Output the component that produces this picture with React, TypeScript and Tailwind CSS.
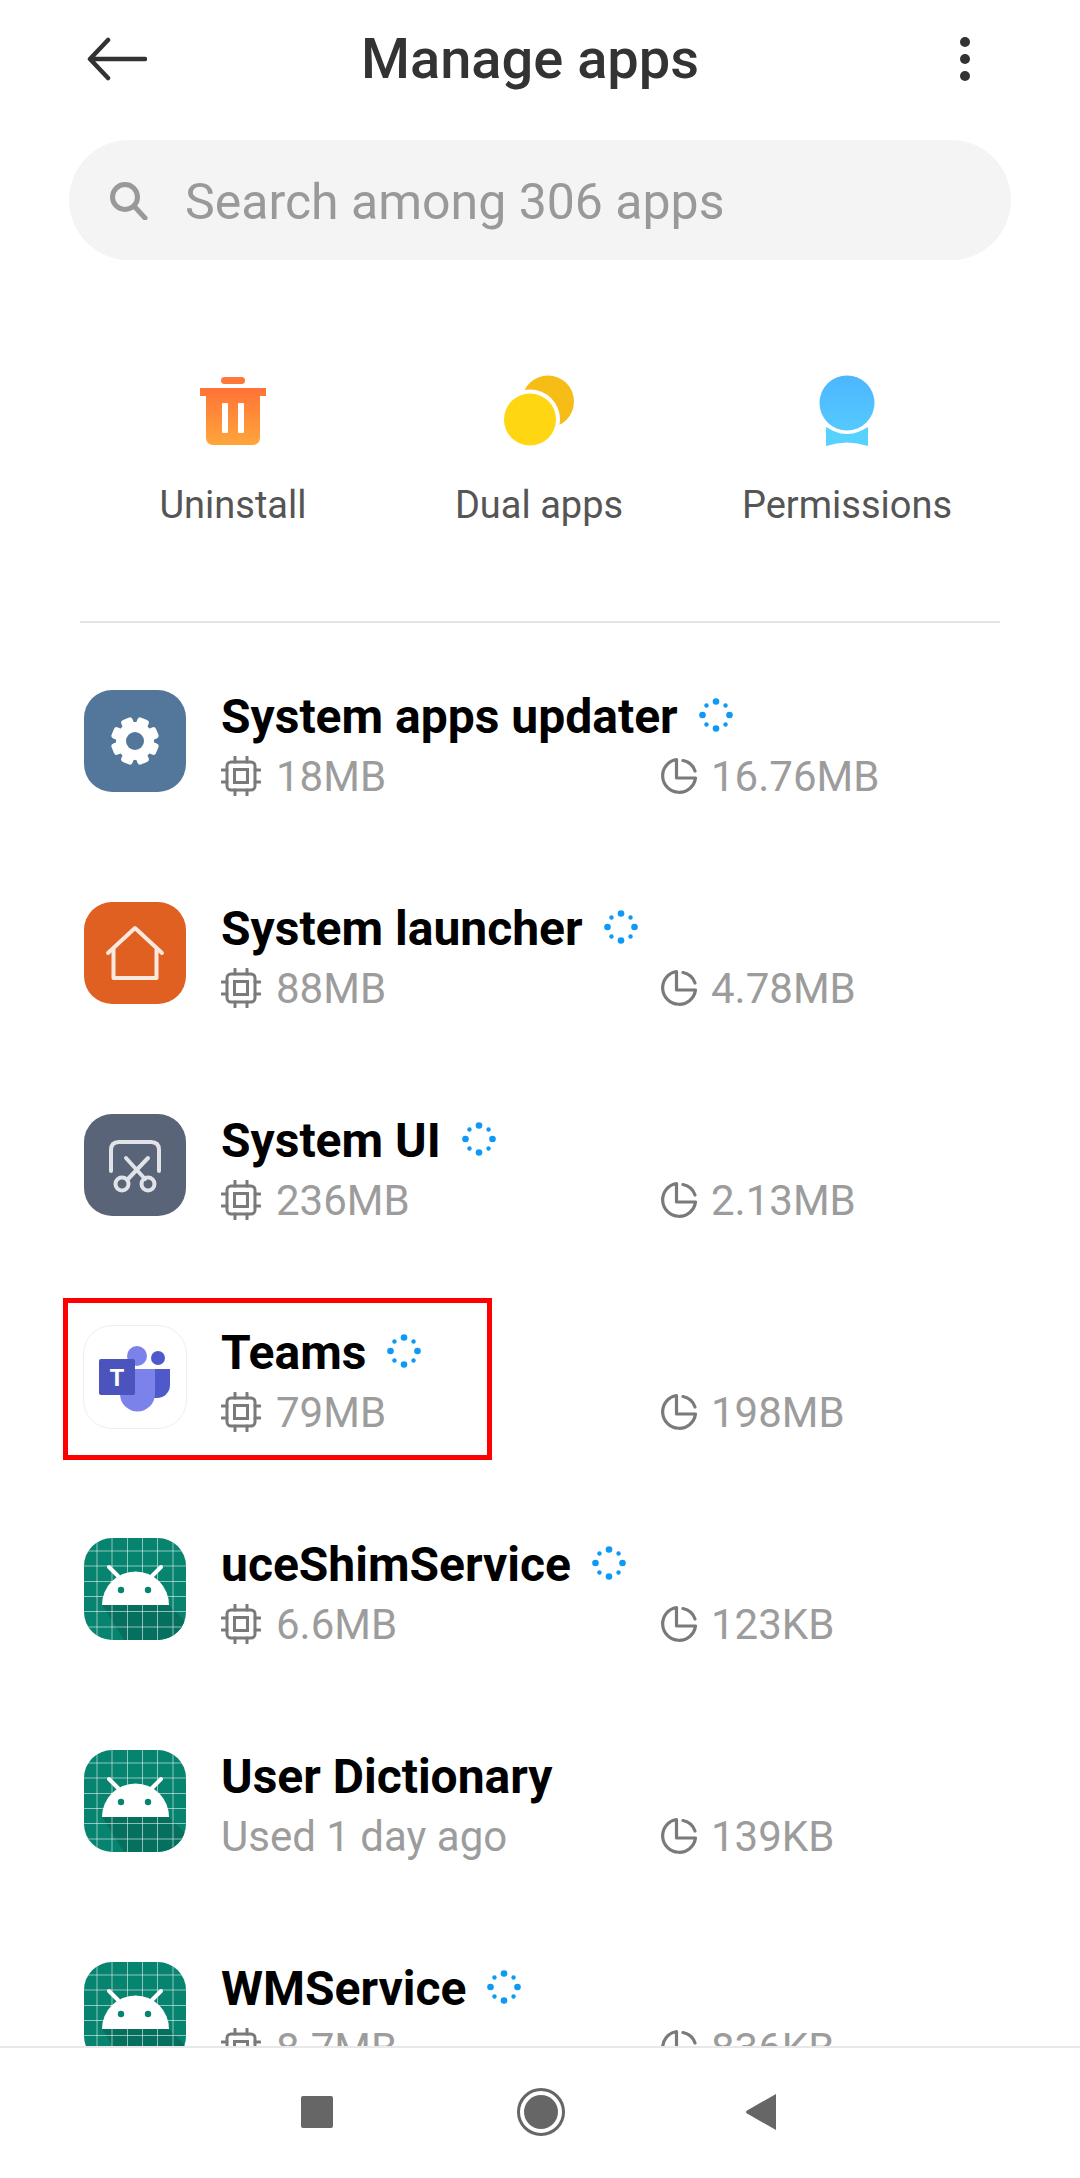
// Manage apps screen
import React from "react";

const font = { fontFamily: "Roboto, sans-serif" };

function Spinner() {
  const big = [0, 90, 180, 270];
  const small = [45, 135, 225, 315];
  const pt = (deg: number) => {
    const a = (deg * Math.PI) / 180;
    return { cx: 17 + 13.5 * Math.cos(a), cy: 17 + 13.5 * Math.sin(a) };
  };
  return (
    <svg width="34" height="34" viewBox="0 0 34 34" className="mb-[4px] shrink-0">
      {big.map((d) => (
        <circle key={d} {...pt(d)} r="3.300" fill="#0d99f5" />
      ))}
      {small.map((d) => (
        <circle key={d} {...pt(d)} r="2.200" fill="#0d99f5" />
      ))}
    </svg>
  );
}

function ChipIcon() {
  return (
    <svg width="40" height="40" viewBox="0 0 40 40" fill="none" stroke="#7a7a7a" strokeWidth="3" className="shrink-0">
      <rect x="6" y="6" width="28" height="28" rx="4" />
      <rect x="13.5" y="13.5" width="13" height="13" />
      <path d="M14 1v5M26 1v5M14 34v5M26 34v5M1 14h5M1 26h5M34 14h5M34 26h5" strokeLinecap="round" />
    </svg>
  );
}

function PieIcon() {
  return (
    <svg width="40" height="40" viewBox="0 0 40 40" fill="none" stroke="#7a7a7a" strokeWidth="3.2" className="shrink-0">
      <path d="M17.5 3.5A16.5 16.5 0 1 0 36.5 22H17.5V3.5Z" strokeLinejoin="round" />
      <path d="M24 4.5A16 16 0 0 1 36 15" strokeLinecap="round" />
    </svg>
  );
}

function GearIcon() {
  const teeth = [0, 45, 90, 135, 180, 225, 270, 315];
  return (
    <svg width="102" height="102" viewBox="0 0 102 102">
      <rect width="102" height="102" fill="#52779a" />
      {teeth.map((d) => (
        <rect key={d} x="45" y="27" width="12" height="14" rx="3" fill="#fff" transform={`rotate(${d + 22.5} 51 51)`} />
      ))}
      <circle cx="51" cy="51" r="19" fill="#fff" />
      <circle cx="51" cy="51" r="9" fill="#52779a" />
    </svg>
  );
}

function HomeIcon() {
  return (
    <svg width="102" height="102" viewBox="0 0 102 102" fill="none">
      <rect width="102" height="102" fill="#df6020" />
      <path d="M24 51 51 26l27 25" stroke="#fbe8df" strokeWidth="4" strokeLinecap="round" strokeLinejoin="round" />
      <path d="M29.500 47v29h43V47" stroke="#fbe8df" strokeWidth="4" strokeLinejoin="round" />
    </svg>
  );
}

function ScissorsIcon() {
  return (
    <svg width="102" height="102" viewBox="0 0 102 102" fill="none" stroke="#e1e3e8" strokeWidth="4">
      <rect width="102" height="102" fill="#5a6478" stroke="none" />
      <path d="M27 57V36q0-8 8-8h32q8 0 8 8v21" strokeLinecap="round" />
      <path d="M42 44l19 21M64 44 44 65" strokeLinecap="round" />
      <circle cx="38" cy="70" r="6.500" />
      <circle cx="64" cy="70" r="6.500" />
    </svg>
  );
}

function TeamsIcon() {
  return (
    <svg width="102" height="102" viewBox="0 0 102 102">
      <rect width="102" height="102" fill="#fff" />
      <circle cx="74" cy="32" r="7" fill="#5059c9" />
      <path d="M68 43h18v16a13 13 0 0 1-13 13h-5Z" fill="#5059c9" />
      <circle cx="53" cy="30" r="10" fill="#7b83eb" />
      <path d="M36 43h35v25a17 17 0 0 1-35 0Z" fill="#7b83eb" />
      <rect x="15" y="33" width="36" height="36" rx="2" fill="#4b53bc" />
      <text x="33" y="60" textAnchor="middle" fontFamily="Roboto, sans-serif" fontWeight="700" fontSize="24" fill="#fff">
        T
      </text>
    </svg>
  );
}

function AndroidIcon() {
  const lines = [13, 28, 43.500, 58.500, 73.500, 89];
  return (
    <svg width="102" height="102" viewBox="0 0 102 102">
      <rect width="102" height="102" fill="#07846f" />
      <path d="M18 67h67l17 17v18H40Z" fill="#06705f" />
      {lines.map((p) => (
        <g key={p} stroke="#fff" strokeOpacity=".55" strokeWidth="1">
          <path d={`M${p} 0v102`} />
          <path d={`M0 ${p}h102`} />
        </g>
      ))}
      <path d="M18 67a33.500 33.500 0 0 1 67 0Z" fill="#fff" />
      <path d="M25 29l9 9M77 29l-9 9" stroke="#fff" strokeWidth="4" strokeLinecap="round" />
      <circle cx="37" cy="52" r="3.200" fill="#07846f" />
      <circle cx="64" cy="52" r="3.200" fill="#07846f" />
    </svg>
  );
}

interface AppRow {
  name: string;
  icon: React.ReactNode;
  ram?: string;
  used?: string;
  storage: string;
  bordered?: boolean;
  marked?: boolean;
  spinner?: boolean;
}

const apps: AppRow[] = [
  { name: "System apps updater", icon: <GearIcon />, ram: "18MB", storage: "16.76MB", spinner: true },
  { name: "System launcher", icon: <HomeIcon />, ram: "88MB", storage: "4.78MB", spinner: true },
  { name: "System UI", icon: <ScissorsIcon />, ram: "236MB", storage: "2.13MB", spinner: true },
  { name: "Teams", icon: <TeamsIcon />, ram: "79MB", storage: "198MB", spinner: true, bordered: true, marked: true },
  { name: "uceShimService", icon: <AndroidIcon />, ram: "6.6MB", storage: "123KB", spinner: true },
  { name: "User Dictionary", icon: <AndroidIcon />, used: "Used 1 day ago", storage: "139KB" },
  { name: "WMService", icon: <AndroidIcon />, ram: "8.7MB", storage: "836KB", spinner: true },
];

function Row({ app }: { app: AppRow }) {
  return (
    <div className="relative flex h-[212px] shrink-0 items-center pl-[84px]">
      {app.marked && (
        <div className="absolute left-[63px] top-[27px] h-[162px] w-[429px] border-[5px] border-[#ff0000]" />
      )}
      <div
        className={`h-[102px] w-[102px] shrink-0 overflow-hidden rounded-[28px] ${
          app.bordered ? "outline outline-1 outline-[#eeeeee]" : ""
        }`}
      >
        {app.icon}
      </div>
      <div className="ml-[35px] flex-1 pt-[8px]">
        <div className="flex h-[52px] items-center gap-[21px] text-[48px] font-bold leading-[52px] text-black">
          {app.name}
          {app.spinner && <Spinner />}
        </div>
        <div className="mt-[10px] flex h-[47px] items-center text-[42px] leading-[47px] text-[#9c9c9c]">
          <div className="flex w-[438px] items-center gap-[15px]">
            {app.ram ? (
              <>
                <ChipIcon />
                {app.ram}
              </>
            ) : (
              app.used
            )}
          </div>
          <div className="flex items-center gap-[12px]">
            <PieIcon />
            {app.storage}
          </div>
        </div>
      </div>
    </div>
  );
}

function ActionIcons({ kind }: { kind: string }) {
  if (kind === "trash") {
    return (
      <svg width="70" height="70" viewBox="0 0 70 70">
        <defs>
          <linearGradient id="trash" x1="0" y1="0" x2="0" y2="1">
            <stop offset="0" stopColor="#ff7336" />
            <stop offset="1" stopColor="#ffa53c" />
          </linearGradient>
        </defs>
        <rect x="23" y="1" width="24" height="7" rx="3.500" fill="#ff7739" />
        <path d="M2 12h66v8h-6v42a7 7 0 0 1-7 7H15a7 7 0 0 1-7-7V20H2Z" fill="url(#trash)" />
        <rect x="24" y="27" width="6" height="30" rx="1" fill="#fff" />
        <rect x="40" y="27" width="6" height="30" rx="1" fill="#fff" />
      </svg>
    );
  }
  if (kind === "dual") {
    return (
      <svg width="72" height="72" viewBox="0 0 72 72">
        <circle cx="45" cy="26.500" r="26" fill="#f6bd16" />
        <circle cx="27" cy="44.500" r="30" fill="#fff" />
        <circle cx="27" cy="44.500" r="26" fill="#ffd612" />
      </svg>
    );
  }
  return (
    <svg width="70" height="72" viewBox="0 0 70 72">
      <defs>
        <linearGradient id="perm" x1="0" y1="0" x2="0" y2="1">
          <stop offset="0" stopColor="#4cb6ff" />
          <stop offset="1" stopColor="#55c9ff" />
        </linearGradient>
      </defs>
      <path d="M14 52q21 12 42 0v19q-21-7-42 0Z" fill="#57d2ff" />
      <circle cx="35" cy="28" r="31" fill="#fff" />
      <circle cx="35" cy="28" r="27.500" fill="url(#perm)" />
    </svg>
  );
}

export default function App() {
  return (
    <div className="flex h-[2178px] w-[1080px] flex-col overflow-hidden bg-white" style={font}>
      <div className="h-[2046px] overflow-hidden">
        {/* Title bar */}
        <div className="relative flex h-[140px] items-center pb-[22px]">
          <svg width="60" height="44" viewBox="0 0 60 44" fill="none" stroke="#333" strokeWidth="4.500" className="ml-[87px]">
            <path d="M58 22H3M21 3 3 22l18 19" strokeLinecap="round" strokeLinejoin="round" />
          </svg>
          <div className="ml-[214px] text-[56px] font-medium leading-[60px] text-[#333333]">Manage apps</div>
          <div className="ml-auto mr-[110px] flex flex-col gap-[7px]">
            <div className="h-[10px] w-[10px] rounded-full bg-[#333333]" />
            <div className="h-[10px] w-[10px] rounded-full bg-[#333333]" />
            <div className="h-[10px] w-[10px] rounded-full bg-[#333333]" />
          </div>
        </div>

        {/* Search */}
        <div className="mx-[69px] flex h-[120px] items-center rounded-[60px] bg-[#f4f4f4] pl-[39px]">
          <svg width="40" height="40" viewBox="0 0 40 40" fill="none" stroke="#999999" strokeWidth="5">
            <circle cx="17" cy="17" r="12.500" />
            <path d="M26 26l11 12" strokeLinecap="round" />
          </svg>
          <div className="ml-[37px] pt-[3px] text-[50px] leading-[56px] text-[#999999]">Search among 306 apps</div>
        </div>

        {/* Shortcuts */}
        <div className="mt-[115px] grid grid-cols-[306px_306px_310px] pl-[80px]">
          {[
            { kind: "trash", label: "Uninstall" },
            { kind: "dual", label: "Dual apps" },
            { kind: "perm", label: "Permissions" },
          ].map((a) => (
            <div key={a.kind} className="flex flex-col items-center">
              <div className="flex h-[72px] items-center">
                <ActionIcons kind={a.kind} />
              </div>
              <div className="mt-[36px] text-[38px] leading-[44px] text-[#555555]">{a.label}</div>
            </div>
          ))}
        </div>

        <div className="mx-[80px] mt-[94px] h-[2px] bg-[#e4e4e4]" />

        {/* App list */}
        <div className="mt-[12px] flex flex-col">
          {apps.map((app) => (
            <Row key={app.name} app={app} />
          ))}
        </div>
      </div>

      {/* Navigation bar */}
      <div className="flex h-[132px] items-center justify-center border-t-2 border-[#e8e8e8] bg-white pb-[2px] pr-[2px]">
        <div className="h-[32px] w-[32px] rounded-[2px] bg-[#666666]" />
        <div className="ml-[184px] flex h-[48px] w-[48px] items-center justify-center rounded-full border-[3px] border-[#666666]">
          <div className="h-[34px] w-[34px] rounded-full bg-[#666666]" />
        </div>
        <svg width="32" height="38" viewBox="0 0 32 38" className="ml-[180px]">
          <path d="M31 1v36L2 20.500q-2-1.500 0-3Z" fill="#666666" />
        </svg>
      </div>
    </div>
  );
}
